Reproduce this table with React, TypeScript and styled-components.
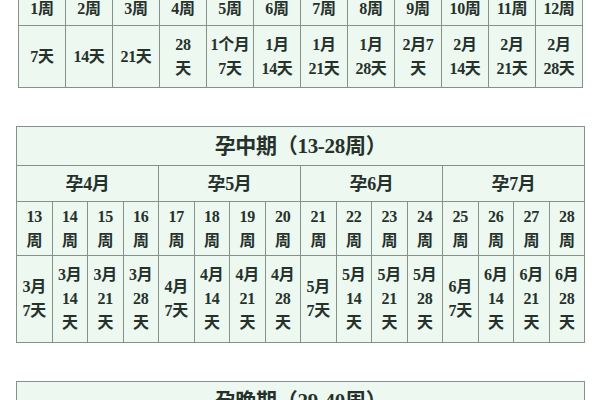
import React from "react";
import styled, { createGlobalStyle } from "styled-components";

const GlobalStyle = createGlobalStyle`
  html, body {
    margin: 0;
    padding: 0;
    background: #ffffff;
  }
  body {
    font-family: "Liberation Serif", "Noto Sans CJK SC", serif;
    color: #26312c;
  }
`;

const Page = styled.div`
  display: flex;
  flex-direction: column;
  gap: 38px;
  margin-top: -8px;
  padding: 0 15px 0 16px;
  height: 408px;
  overflow: hidden;
`;

const Grid = styled.div<{ $cols: number; $rows: string; $inset?: number }>`
  display: grid;
  grid-template-columns: repeat(${(p) => p.$cols}, 1fr);
  grid-template-rows: ${(p) => p.$rows};
  gap: 1px;
  background: #85918b;
  border: 1px solid #85918b;
  margin: 0 ${(p) => p.$inset ?? 0}px;
`;

const Cell = styled.div<{ $span?: number; $size?: number }>`
  grid-column: span ${(p) => p.$span ?? 1};
  background: #ecf8f0;
  display: flex;
  flex-direction: column;
  align-items: center;
  justify-content: center;
  text-align: center;
  font-weight: 700;
  font-size: ${(p) => p.$size ?? 16}px;
  line-height: 24px;
  white-space: nowrap;
  letter-spacing: -0.3px;
`;

const Line = styled.span`
  display: block;
`;

type Lines = string[];

const topWeeks = Array.from({ length: 12 }, (_, i) => `${i + 1}周`);
const topDays: Lines[] = [
  ["7天"],
  ["14天"],
  ["21天"],
  ["28", "天"],
  ["1个月", "7天"],
  ["1月", "14天"],
  ["1月", "21天"],
  ["1月", "28天"],
  ["2月7", "天"],
  ["2月", "14天"],
  ["2月", "21天"],
  ["2月", "28天"],
];

const midMonths = ["孕4月", "孕5月", "孕6月", "孕7月"];
const midWeeks = Array.from({ length: 16 }, (_, i) => [`${i + 13}`, "周"]);
const midDays: Lines[] = [3, 4, 5, 6].flatMap((m) => [
  [`${m}月`, "7天"],
  [`${m}月`, "14", "天"],
  [`${m}月`, "21", "天"],
  [`${m}月`, "28", "天"],
]);

const MultiLine: React.FC<{ lines: Lines }> = ({ lines }) => (
  <>
    {lines.map((l, i) => (
      <Line key={i}>{l}</Line>
    ))}
  </>
);

const App: React.FC = () => {
  return (
    <>
      <GlobalStyle />
      <Page>
        <Grid $cols={12} $rows="32px 61px" $inset={2}>
          {topWeeks.map((w) => (
            <Cell key={w}>{w}</Cell>
          ))}
          {topDays.map((d, i) => (
            <Cell key={i}>
              <MultiLine lines={d} />
            </Cell>
          ))}
        </Grid>

        <Grid $cols={16} $rows="38px 35px 53px 86px">
          <Cell $span={16} $size={21}>
            孕中期（13-28周）
          </Cell>
          {midMonths.map((m) => (
            <Cell key={m} $span={4} $size={18}>
              {m}
            </Cell>
          ))}
          {midWeeks.map((w, i) => (
            <Cell key={i}>
              <MultiLine lines={w} />
            </Cell>
          ))}
          {midDays.map((d, i) => (
            <Cell key={i}>
              <MultiLine lines={d} />
            </Cell>
          ))}
        </Grid>

        <Grid $cols={1} $rows="38px">
          <Cell $size={21}>孕晚期（29-40周）</Cell>
        </Grid>
      </Page>
    </>
  );
};

export default App;
